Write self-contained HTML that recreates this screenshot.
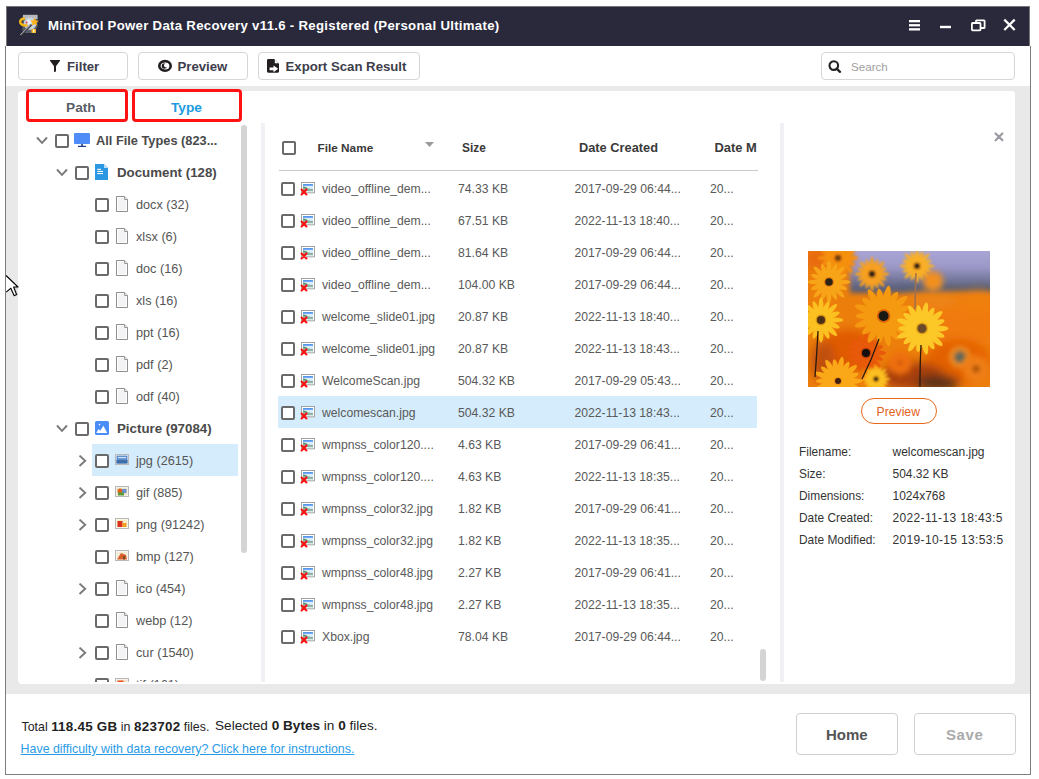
<!DOCTYPE html>
<html><head><meta charset="utf-8">
<style>
*{box-sizing:border-box;margin:0;padding:0}
html,body{width:1039px;height:779px;overflow:hidden;background:#fff;font-family:"Liberation Sans",sans-serif;position:relative}
.a{position:absolute}
.t{position:absolute;white-space:nowrap;line-height:16px;height:16px}
#title{left:6px;top:6px;width:1024px;height:40px;background:#2a293b;border:1px solid #75757a;border-bottom:0}
.btn{position:absolute;top:52px;height:28px;border:1px solid #d6d6d6;border-radius:4px;background:#fff}
.btxt{font-size:13.2px;font-weight:bold;color:#3d3d4b}
#gray{left:6px;top:86px;width:1024px;height:608px;background:#e9e9e9}
#panel{left:18px;top:91px;width:997px;height:593px;background:#fff;border-radius:4px;overflow:hidden}
.red{position:absolute;top:89px;height:33px;border:3px solid #fe1212;border-radius:4px}
.cb{position:absolute;width:14px;height:14px;border:2px solid #6a6a6a;border-radius:2px;background:#fff}
.tr{font-size:12.7px;color:#555}
.trb{font-size:13px;font-weight:bold;color:#4a4a4a}
.rw{font-size:12.2px;color:#595959}
.hd{font-size:12.4px;font-weight:bold;color:#3a3a3a}
.inf{font-size:12.2px;color:#333}
</style></head><body>
<!-- window border -->
<div class="a" style="left:5px;top:46px;width:1px;height:729px;background:#7d7d7d"></div>
<div class="a" style="left:1030px;top:46px;width:1px;height:729px;background:#7d7d7d"></div>
<div class="a" style="left:5px;top:774px;width:1026px;height:1px;background:#7d7d7d"></div>

<div id="title" class="a"></div>
<svg class="a" style="left:16px;top:11px" width="26" height="28" viewBox="16 11 26 28">
<path d="M23 15 H37.5 V27 L33 33 H22.5 V17Z" fill="#5c5e6a"/>
<path d="M23 14.8 H37.5 V19 H23Z" fill="#b8b8bc"/>
<circle cx="30" cy="23.5" r="6.3" fill="#c8d2dc"/>
<circle cx="29" cy="22" r="2.6" fill="#e6eef4"/>
<path d="M25 18.5 Q19 19 20.5 23 Q22 26 27.5 25.5" stroke="#f6b614" stroke-width="2.6" fill="none"/>
<circle cx="26.6" cy="22.4" r="1" fill="#e83a3a"/>
<path d="M34.5 17.5 l1.3 2.9 3 .3 -2.3 2 .7 3 -2.7 -1.6 -2.7 1.6 .7 -3 -2.3 -2 3 -.3z" fill="#ffb31a"/>
<path d="M20.5 35.5 L31.5 24.5" stroke="#3a3a44" stroke-width="2.2"/>
<path d="M20.3 35 L31 24.3" stroke="#c8ccd4" stroke-width="0.9"/>
<rect x="31.5" y="29" width="4.5" height="4" fill="#f2b21e"/>
<rect x="33" y="29.5" width="1.5" height="3" fill="#fff4c0"/>
</svg>
<div class="t " style="left:48px;top:17.73px;font-size:13.2px;font-weight:bold;color:#fff;letter-spacing:0.3px">MiniTool Power Data Recovery v11.6 - Registered (Personal Ultimate)</div>
<svg class="a" style="left:900px;top:14px" width="125" height="22" viewBox="900 14 125 22">
<g fill="#fff">
<rect x="909" y="20" width="11" height="2.3"/><rect x="909" y="24.1" width="11" height="2.3"/><rect x="909" y="28.2" width="11" height="2.3"/>
<rect x="940" y="25.8" width="11" height="2.4"/>
</g>
<g fill="none" stroke="#fff" stroke-width="1.8">
<rect x="976" y="20.4" width="8.6" height="7.6" rx="0.6"/>
<rect x="971.9" y="23" width="8.6" height="7.4" rx="0.8" fill="#2a293b"/>
<path d="M1004.3 19.6 L1014.7 30 M1014.7 19.6 L1004.3 30" stroke-width="2.2"/>
</g>
</svg>
<div class="btn" style="left:18px;width:110px"></div>
<svg class="a" style="left:49px;top:59px" width="12" height="14" viewBox="0 0 12 14"><path d="M1.2 1 H10.8 Q11.3 1 11 1.8 L7 7.2 V12.5 L5 13 V7.2 L1 1.8 Q0.7 1 1.2 1Z" fill="#231f20"/></svg>
<div class="t btxt" style="left:67px;top:59.43px;font-size:13.2px;">Filter</div>
<div class="btn" style="left:138px;width:110px"></div>
<svg class="a" style="left:157px;top:59px" width="16" height="14" viewBox="0 0 16 14"><ellipse cx="8" cy="6.9" rx="5.7" ry="4.8" fill="none" stroke="#231f20" stroke-width="2.6"/><circle cx="7.4" cy="7" r="2.7" fill="#231f20"/><circle cx="9.3" cy="6.3" r="2.3" fill="#fff"/></svg>
<div class="t btxt" style="left:177.5px;top:59.43px;font-size:13.2px;">Preview</div>
<div class="btn" style="left:258px;width:162px"></div>
<svg class="a" style="left:266px;top:58px" width="14" height="16" viewBox="0 0 14 16"><path d="M1 2.2 Q1 1 2.2 1 H8.2 L13 5.8 V13.6 Q13 14.7 11.8 14.7 H2.2 Q1 14.7 1 13.6Z" fill="#231f20"/><path d="M8.8 1.6 L12.4 5.2 H8.8Z" fill="#fff"/><path d="M3.6 9.4 H7.5 V7.4 L12.2 10.8 L7.5 14.2 V12.2 H3.6Z" fill="#fff"/></svg>
<div class="t btxt" style="left:285.5px;top:59.43px;font-size:13.2px;">Export Scan Result</div>
<div class="btn" style="left:821px;width:194px"></div>
<svg class="a" style="left:828px;top:60px" width="14" height="13" viewBox="0 0 14 13"><circle cx="5.8" cy="5.6" r="4.3" fill="none" stroke="#222" stroke-width="2.1"/><path d="M8.6 8.6 L12 11.8" stroke="#222" stroke-width="2.3" stroke-linecap="round"/></svg>
<div class="t " style="left:851px;top:58.98px;font-size:11.6px;color:#a0a0a0">Search</div>
<div id="gray" class="a"></div>
<div id="panel" class="a"></div>
<div class="red" style="left:26px;width:102px"></div>
<div class="red" style="left:132px;width:110px"></div>
<div class="t " style="left:66px;top:100.25px;font-size:13.7px;font-weight:bold;color:#5a5d66">Path</div>
<div class="t " style="left:171px;top:100.25px;font-size:13.7px;font-weight:bold;color:#1d9be2">Type</div>
<div class="a" style="left:0;top:0;width:1039px;height:682px;overflow:hidden">
<div class="a" style="left:92px;top:444px;width:146px;height:32px;background:#d5ecfc"></div>
<svg class="a" style="left:36px;top:135.5px" width="12" height="10" viewBox="0 0 12 10"><path d="M1 1.5 L6 6.8 L11 1.5" fill="none" stroke="#7a7a7a" stroke-width="1.9"/></svg>
<div class="cb" style="left:55px;top:134px"></div>
<svg class="a" style="left:74px;top:133px" width="16" height="14" viewBox="0 0 16 14"><rect x="0" y="0" width="16" height="11" rx="1" fill="#4f8cf7"/><rect x="7.2" y="11" width="1.6" height="2" fill="#1d3b8c"/><rect x="4" y="12.8" width="8" height="1.2" fill="#1d3b8c"/></svg>
<div class="t trb" style="left:96px;top:132.56px;font-size:12.8px;">All File Types (823...</div>
<svg class="a" style="left:56px;top:167.5px" width="12" height="10" viewBox="0 0 12 10"><path d="M1 1.5 L6 6.8 L11 1.5" fill="none" stroke="#7a7a7a" stroke-width="1.9"/></svg>
<div class="cb" style="left:75px;top:166px"></div>
<svg class="a" style="left:95px;top:164px" width="13" height="16" viewBox="0 0 13 16"><path d="M0 0 H9 L13 4 V16 H0Z" fill="#2c98e2"/><path d="M9 0 V4 H13Z" fill="#bfe0f8"/><rect x="2.2" y="4.8" width="3.8" height="1.1" fill="#fff"/><rect x="2.2" y="6.9" width="5.8" height="1.1" fill="#fff"/><rect x="2.2" y="9" width="5.8" height="1.1" fill="#fff"/></svg>
<div class="t trb" style="left:117px;top:164.99px;font-size:13.3px;">Document (128)</div>
<div class="cb" style="left:95px;top:198px"></div>
<svg class="a" style="left:116px;top:196px" width="12" height="16" viewBox="0 0 12 16"><path d="M0.5 0.5 H8.6 L11.5 3.4 V15.5 H0.5Z" fill="#fff" stroke="#8e8e8e"/><rect x="2" y="2" width="8" height="12" fill="#f3f3f5"/><path d="M8.6 0.5 V3.4 H11.5" fill="#fff" stroke="#8e8e8e"/></svg>
<div class="t tr" style="left:136px;top:196.80px;font-size:12.7px;">docx (32)</div>
<div class="cb" style="left:95px;top:230px"></div>
<svg class="a" style="left:116px;top:228px" width="12" height="16" viewBox="0 0 12 16"><path d="M0.5 0.5 H8.6 L11.5 3.4 V15.5 H0.5Z" fill="#fff" stroke="#8e8e8e"/><rect x="2" y="2" width="8" height="12" fill="#f3f3f5"/><path d="M8.6 0.5 V3.4 H11.5" fill="#fff" stroke="#8e8e8e"/></svg>
<div class="t tr" style="left:136px;top:228.80px;font-size:12.7px;">xlsx (6)</div>
<div class="cb" style="left:95px;top:262px"></div>
<svg class="a" style="left:116px;top:260px" width="12" height="16" viewBox="0 0 12 16"><path d="M0.5 0.5 H8.6 L11.5 3.4 V15.5 H0.5Z" fill="#fff" stroke="#8e8e8e"/><rect x="2" y="2" width="8" height="12" fill="#f3f3f5"/><path d="M8.6 0.5 V3.4 H11.5" fill="#fff" stroke="#8e8e8e"/></svg>
<div class="t tr" style="left:136px;top:260.80px;font-size:12.7px;">doc (16)</div>
<div class="cb" style="left:95px;top:294px"></div>
<svg class="a" style="left:116px;top:292px" width="12" height="16" viewBox="0 0 12 16"><path d="M0.5 0.5 H8.6 L11.5 3.4 V15.5 H0.5Z" fill="#fff" stroke="#8e8e8e"/><rect x="2" y="2" width="8" height="12" fill="#f3f3f5"/><path d="M8.6 0.5 V3.4 H11.5" fill="#fff" stroke="#8e8e8e"/></svg>
<div class="t tr" style="left:136px;top:292.80px;font-size:12.7px;">xls (16)</div>
<div class="cb" style="left:95px;top:326px"></div>
<svg class="a" style="left:116px;top:324px" width="12" height="16" viewBox="0 0 12 16"><path d="M0.5 0.5 H8.6 L11.5 3.4 V15.5 H0.5Z" fill="#fff" stroke="#8e8e8e"/><rect x="2" y="2" width="8" height="12" fill="#f3f3f5"/><path d="M8.6 0.5 V3.4 H11.5" fill="#fff" stroke="#8e8e8e"/></svg>
<div class="t tr" style="left:136px;top:324.80px;font-size:12.7px;">ppt (16)</div>
<div class="cb" style="left:95px;top:358px"></div>
<svg class="a" style="left:116px;top:356px" width="12" height="16" viewBox="0 0 12 16"><path d="M0.5 0.5 H8.6 L11.5 3.4 V15.5 H0.5Z" fill="#fff" stroke="#8e8e8e"/><rect x="2" y="2" width="8" height="12" fill="#f3f3f5"/><path d="M8.6 0.5 V3.4 H11.5" fill="#fff" stroke="#8e8e8e"/></svg>
<div class="t tr" style="left:136px;top:356.80px;font-size:12.7px;">pdf (2)</div>
<div class="cb" style="left:95px;top:390px"></div>
<svg class="a" style="left:116px;top:388px" width="12" height="16" viewBox="0 0 12 16"><path d="M0.5 0.5 H8.6 L11.5 3.4 V15.5 H0.5Z" fill="#fff" stroke="#8e8e8e"/><rect x="2" y="2" width="8" height="12" fill="#f3f3f5"/><path d="M8.6 0.5 V3.4 H11.5" fill="#fff" stroke="#8e8e8e"/></svg>
<div class="t tr" style="left:136px;top:388.80px;font-size:12.7px;">odf (40)</div>
<svg class="a" style="left:56px;top:423.5px" width="12" height="10" viewBox="0 0 12 10"><path d="M1 1.5 L6 6.8 L11 1.5" fill="none" stroke="#7a7a7a" stroke-width="1.9"/></svg>
<div class="cb" style="left:75px;top:422px"></div>
<svg class="a" style="left:95px;top:421px" width="14" height="14" viewBox="0 0 14 14"><rect x="0" y="0" width="14" height="14" rx="1.6" fill="#4a8cf8"/><path d="M1.3 12 L3.6 8 L5.2 9.8 L8.4 4.8 L12.2 12Z" fill="#fff"/><path d="M4.5 2.4 L5.3 3.6 L4.5 4.8 L3.7 3.6Z" fill="#fff"/></svg>
<div class="t trb" style="left:117px;top:420.99px;font-size:13.3px;">Picture (97084)</div>
<svg class="a" style="left:78px;top:455px" width="10" height="12" viewBox="0 0 10 12"><path d="M1.5 0.6 L7.2 5.8 L1.5 11" fill="none" stroke="#7a7a7a" stroke-width="1.9"/></svg>
<div class="cb" style="left:95px;top:454px"></div>
<svg class="a" style="left:115px;top:454px" width="14" height="11" viewBox="0 0 14 11"><rect x="0.5" y="0.5" width="13" height="10" fill="#fff" stroke="#b8b8b8"/><rect x="1.5" y="1.5" width="11" height="8" fill="#5b8fd0"/><rect x="1.5" y="6" width="11" height="3.5" fill="#3e6fa8"/><rect x="3" y="3" width="8" height="1.2" fill="#cfe2f5"/></svg>
<div class="t tr" style="left:136px;top:452.80px;font-size:12.7px;">jpg (2615)</div>
<svg class="a" style="left:78px;top:487px" width="10" height="12" viewBox="0 0 10 12"><path d="M1.5 0.6 L7.2 5.8 L1.5 11" fill="none" stroke="#7a7a7a" stroke-width="1.9"/></svg>
<div class="cb" style="left:95px;top:486px"></div>
<svg class="a" style="left:115px;top:486px" width="14" height="11" viewBox="0 0 14 11"><rect x="0.5" y="0.5" width="13" height="10" fill="#fff" stroke="#b8b8b8"/><rect x="1.5" y="1.5" width="11" height="8" fill="#e8e2c8"/><circle cx="5" cy="5" r="2.5" fill="#e0641a"/><rect x="7" y="3" width="4.5" height="4" fill="#6a8fd0"/><rect x="3" y="6.5" width="6" height="3" fill="#5a9a3a"/></svg>
<div class="t tr" style="left:136px;top:484.80px;font-size:12.7px;">gif (885)</div>
<svg class="a" style="left:78px;top:519px" width="10" height="12" viewBox="0 0 10 12"><path d="M1.5 0.6 L7.2 5.8 L1.5 11" fill="none" stroke="#7a7a7a" stroke-width="1.9"/></svg>
<div class="cb" style="left:95px;top:518px"></div>
<svg class="a" style="left:115px;top:518px" width="14" height="11" viewBox="0 0 14 11"><rect x="0.5" y="0.5" width="13" height="10" fill="#fff" stroke="#b8b8b8"/><rect x="1.5" y="1.5" width="11" height="8" fill="#f6e9c8"/><rect x="2.5" y="3" width="5" height="6" fill="#d8301a"/><rect x="7.5" y="5" width="4" height="4" fill="#f0a020"/></svg>
<div class="t tr" style="left:136px;top:516.80px;font-size:12.7px;">png (91242)</div>
<div class="cb" style="left:95px;top:550px"></div>
<svg class="a" style="left:115px;top:550px" width="14" height="11" viewBox="0 0 14 11"><rect x="0.5" y="0.5" width="13" height="10" fill="#fff" stroke="#b8b8b8"/><rect x="1.5" y="1.5" width="11" height="8" fill="#f3ead8"/><path d="M2 9.5 L6 3 L11 5 L12 9.5Z" fill="#d9602a"/><rect x="8" y="6" width="2" height="3.5" fill="#7a4a20"/></svg>
<div class="t tr" style="left:136px;top:548.80px;font-size:12.7px;">bmp (127)</div>
<svg class="a" style="left:78px;top:583px" width="10" height="12" viewBox="0 0 10 12"><path d="M1.5 0.6 L7.2 5.8 L1.5 11" fill="none" stroke="#7a7a7a" stroke-width="1.9"/></svg>
<div class="cb" style="left:95px;top:582px"></div>
<svg class="a" style="left:116px;top:580px" width="12" height="16" viewBox="0 0 12 16"><path d="M0.5 0.5 H8.6 L11.5 3.4 V15.5 H0.5Z" fill="#fff" stroke="#8e8e8e"/><rect x="2" y="2" width="8" height="12" fill="#f3f3f5"/><path d="M8.6 0.5 V3.4 H11.5" fill="#fff" stroke="#8e8e8e"/></svg>
<div class="t tr" style="left:136px;top:580.80px;font-size:12.7px;">ico (454)</div>
<div class="cb" style="left:95px;top:614px"></div>
<svg class="a" style="left:116px;top:612px" width="12" height="16" viewBox="0 0 12 16"><path d="M0.5 0.5 H8.6 L11.5 3.4 V15.5 H0.5Z" fill="#fff" stroke="#8e8e8e"/><rect x="2" y="2" width="8" height="12" fill="#f3f3f5"/><path d="M8.6 0.5 V3.4 H11.5" fill="#fff" stroke="#8e8e8e"/></svg>
<div class="t tr" style="left:136px;top:612.80px;font-size:12.7px;">webp (12)</div>
<svg class="a" style="left:78px;top:647px" width="10" height="12" viewBox="0 0 10 12"><path d="M1.5 0.6 L7.2 5.8 L1.5 11" fill="none" stroke="#7a7a7a" stroke-width="1.9"/></svg>
<div class="cb" style="left:95px;top:646px"></div>
<svg class="a" style="left:116px;top:644px" width="12" height="16" viewBox="0 0 12 16"><path d="M0.5 0.5 H8.6 L11.5 3.4 V15.5 H0.5Z" fill="#fff" stroke="#8e8e8e"/><rect x="2" y="2" width="8" height="12" fill="#f3f3f5"/><path d="M8.6 0.5 V3.4 H11.5" fill="#fff" stroke="#8e8e8e"/></svg>
<div class="t tr" style="left:136px;top:644.80px;font-size:12.7px;">cur (1540)</div>
<div class="cb" style="left:95px;top:678px"></div>
<svg class="a" style="left:115px;top:678px" width="14" height="11" viewBox="0 0 14 11"><rect x="0.5" y="0.5" width="13" height="10" fill="#fff" stroke="#b8b8b8"/><rect x="1.5" y="1.5" width="11" height="8" fill="#f0e0d0"/><rect x="2.5" y="2.5" width="6" height="7" fill="#e85a1a"/></svg>
<div class="t tr" style="left:136px;top:676.80px;font-size:12.7px;">tif (161)</div>
<div class="a" style="left:241px;top:125px;width:6px;height:428px;background:#d4d4d4;border-radius:3px"></div>
<div class="a" style="left:261px;top:123px;width:4px;height:561px;background:#f0f0f5"></div>
<div class="a" style="left:780px;top:123px;width:4px;height:561px;background:#f0f0f5"></div>
<div class="cb" style="left:282px;top:141px"></div>
<div class="t hd" style="left:317.5px;top:139.91px;font-size:11.8px;">File Name</div>
<svg class="a" style="left:424px;top:141px" width="11" height="7" viewBox="0 0 11 7"><path d="M1 1 H10 L5.5 6Z" fill="#9a9a9a"/></svg>
<div class="t hd" style="left:462px;top:139.88px;font-size:11.9px;">Size</div>
<div class="t hd" style="left:579px;top:139.56px;font-size:12.8px;">Date Created</div>
<div class="t hd" style="left:714.5px;top:139.53px;font-size:12.9px;">Date M</div>
<div class="a" style="left:279px;top:170px;width:479px;height:1px;background:#c9c9c9"></div>
<div class="a" style="left:278px;top:396px;width:479px;height:32px;background:#d5ecfc"></div>
<div class="cb" style="left:281px;top:182px"></div>
<svg class="a" style="left:300px;top:181px" width="16" height="15" viewBox="0 0 16 15"><rect x="1.5" y="1.5" width="13" height="10.3" fill="#fff" stroke="#a3a3a3"/><rect x="3" y="3" width="10" height="7.3" fill="#dcf0f8"/><rect x="3" y="3" width="10" height="1.8" fill="#5a98f0"/><path d="M3 5.6 Q6 5.4 8.5 7.6 L13 8 V10.3 H3Z" fill="#8ab4a4"/><path d="M3 6.2 Q5 6 7 7.5" stroke="#5a8a64" stroke-width="1" fill="none"/><path d="M1.6 8.6 L6.4 13.4 M6.4 8.6 L1.6 13.4" stroke="#ff0d0d" stroke-width="2.1" stroke-linecap="round"/></svg>
<div class="t rw" style="left:322px;top:180.77px;font-size:12.2px;">video_offline_dem...</div>
<div class="t rw" style="left:458px;top:180.77px;font-size:12.2px;">74.33 KB</div>
<div class="t rw" style="left:574.5px;top:180.77px;font-size:12.2px;">2017-09-29 06:44...</div>
<div class="t rw" style="left:710px;top:180.77px;font-size:12.2px;">20...</div>
<div class="cb" style="left:281px;top:214px"></div>
<svg class="a" style="left:300px;top:213px" width="16" height="15" viewBox="0 0 16 15"><rect x="1.5" y="1.5" width="13" height="10.3" fill="#fff" stroke="#a3a3a3"/><rect x="3" y="3" width="10" height="7.3" fill="#dcf0f8"/><rect x="3" y="3" width="10" height="1.8" fill="#5a98f0"/><path d="M3 5.6 Q6 5.4 8.5 7.6 L13 8 V10.3 H3Z" fill="#8ab4a4"/><path d="M3 6.2 Q5 6 7 7.5" stroke="#5a8a64" stroke-width="1" fill="none"/><path d="M1.6 8.6 L6.4 13.4 M6.4 8.6 L1.6 13.4" stroke="#ff0d0d" stroke-width="2.1" stroke-linecap="round"/></svg>
<div class="t rw" style="left:322px;top:212.77px;font-size:12.2px;">video_offline_dem...</div>
<div class="t rw" style="left:458px;top:212.77px;font-size:12.2px;">67.51 KB</div>
<div class="t rw" style="left:574.5px;top:212.77px;font-size:12.2px;">2022-11-13 18:40...</div>
<div class="t rw" style="left:710px;top:212.77px;font-size:12.2px;">20...</div>
<div class="cb" style="left:281px;top:246px"></div>
<svg class="a" style="left:300px;top:245px" width="16" height="15" viewBox="0 0 16 15"><rect x="1.5" y="1.5" width="13" height="10.3" fill="#fff" stroke="#a3a3a3"/><rect x="3" y="3" width="10" height="7.3" fill="#dcf0f8"/><rect x="3" y="3" width="10" height="1.8" fill="#5a98f0"/><path d="M3 5.6 Q6 5.4 8.5 7.6 L13 8 V10.3 H3Z" fill="#8ab4a4"/><path d="M3 6.2 Q5 6 7 7.5" stroke="#5a8a64" stroke-width="1" fill="none"/><path d="M1.6 8.6 L6.4 13.4 M6.4 8.6 L1.6 13.4" stroke="#ff0d0d" stroke-width="2.1" stroke-linecap="round"/></svg>
<div class="t rw" style="left:322px;top:244.77px;font-size:12.2px;">video_offline_dem...</div>
<div class="t rw" style="left:458px;top:244.77px;font-size:12.2px;">81.64 KB</div>
<div class="t rw" style="left:574.5px;top:244.77px;font-size:12.2px;">2017-09-29 06:44...</div>
<div class="t rw" style="left:710px;top:244.77px;font-size:12.2px;">20...</div>
<div class="cb" style="left:281px;top:278px"></div>
<svg class="a" style="left:300px;top:277px" width="16" height="15" viewBox="0 0 16 15"><rect x="1.5" y="1.5" width="13" height="10.3" fill="#fff" stroke="#a3a3a3"/><rect x="3" y="3" width="10" height="7.3" fill="#dcf0f8"/><rect x="3" y="3" width="10" height="1.8" fill="#5a98f0"/><path d="M3 5.6 Q6 5.4 8.5 7.6 L13 8 V10.3 H3Z" fill="#8ab4a4"/><path d="M3 6.2 Q5 6 7 7.5" stroke="#5a8a64" stroke-width="1" fill="none"/><path d="M1.6 8.6 L6.4 13.4 M6.4 8.6 L1.6 13.4" stroke="#ff0d0d" stroke-width="2.1" stroke-linecap="round"/></svg>
<div class="t rw" style="left:322px;top:276.77px;font-size:12.2px;">video_offline_dem...</div>
<div class="t rw" style="left:458px;top:276.77px;font-size:12.2px;">104.00 KB</div>
<div class="t rw" style="left:574.5px;top:276.77px;font-size:12.2px;">2017-09-29 06:44...</div>
<div class="t rw" style="left:710px;top:276.77px;font-size:12.2px;">20...</div>
<div class="cb" style="left:281px;top:310px"></div>
<svg class="a" style="left:300px;top:309px" width="16" height="15" viewBox="0 0 16 15"><rect x="1.5" y="1.5" width="13" height="10.3" fill="#fff" stroke="#a3a3a3"/><rect x="3" y="3" width="10" height="7.3" fill="#dcf0f8"/><rect x="3" y="3" width="10" height="1.8" fill="#5a98f0"/><path d="M3 5.6 Q6 5.4 8.5 7.6 L13 8 V10.3 H3Z" fill="#8ab4a4"/><path d="M3 6.2 Q5 6 7 7.5" stroke="#5a8a64" stroke-width="1" fill="none"/><path d="M1.6 8.6 L6.4 13.4 M6.4 8.6 L1.6 13.4" stroke="#ff0d0d" stroke-width="2.1" stroke-linecap="round"/></svg>
<div class="t rw" style="left:322px;top:308.77px;font-size:12.2px;">welcome_slide01.jpg</div>
<div class="t rw" style="left:458px;top:308.77px;font-size:12.2px;">20.87 KB</div>
<div class="t rw" style="left:574.5px;top:308.77px;font-size:12.2px;">2022-11-13 18:40...</div>
<div class="t rw" style="left:710px;top:308.77px;font-size:12.2px;">20...</div>
<div class="cb" style="left:281px;top:342px"></div>
<svg class="a" style="left:300px;top:341px" width="16" height="15" viewBox="0 0 16 15"><rect x="1.5" y="1.5" width="13" height="10.3" fill="#fff" stroke="#a3a3a3"/><rect x="3" y="3" width="10" height="7.3" fill="#dcf0f8"/><rect x="3" y="3" width="10" height="1.8" fill="#5a98f0"/><path d="M3 5.6 Q6 5.4 8.5 7.6 L13 8 V10.3 H3Z" fill="#8ab4a4"/><path d="M3 6.2 Q5 6 7 7.5" stroke="#5a8a64" stroke-width="1" fill="none"/><path d="M1.6 8.6 L6.4 13.4 M6.4 8.6 L1.6 13.4" stroke="#ff0d0d" stroke-width="2.1" stroke-linecap="round"/></svg>
<div class="t rw" style="left:322px;top:340.77px;font-size:12.2px;">welcome_slide01.jpg</div>
<div class="t rw" style="left:458px;top:340.77px;font-size:12.2px;">20.87 KB</div>
<div class="t rw" style="left:574.5px;top:340.77px;font-size:12.2px;">2022-11-13 18:43...</div>
<div class="t rw" style="left:710px;top:340.77px;font-size:12.2px;">20...</div>
<div class="cb" style="left:281px;top:374px"></div>
<svg class="a" style="left:300px;top:373px" width="16" height="15" viewBox="0 0 16 15"><rect x="1.5" y="1.5" width="13" height="10.3" fill="#fff" stroke="#a3a3a3"/><rect x="3" y="3" width="10" height="7.3" fill="#dcf0f8"/><rect x="3" y="3" width="10" height="1.8" fill="#5a98f0"/><path d="M3 5.6 Q6 5.4 8.5 7.6 L13 8 V10.3 H3Z" fill="#8ab4a4"/><path d="M3 6.2 Q5 6 7 7.5" stroke="#5a8a64" stroke-width="1" fill="none"/><path d="M1.6 8.6 L6.4 13.4 M6.4 8.6 L1.6 13.4" stroke="#ff0d0d" stroke-width="2.1" stroke-linecap="round"/></svg>
<div class="t rw" style="left:322px;top:372.77px;font-size:12.2px;">WelcomeScan.jpg</div>
<div class="t rw" style="left:458px;top:372.77px;font-size:12.2px;">504.32 KB</div>
<div class="t rw" style="left:574.5px;top:372.77px;font-size:12.2px;">2017-09-29 05:43...</div>
<div class="t rw" style="left:710px;top:372.77px;font-size:12.2px;">20...</div>
<div class="cb" style="left:281px;top:406px"></div>
<svg class="a" style="left:300px;top:405px" width="16" height="15" viewBox="0 0 16 15"><rect x="1.5" y="1.5" width="13" height="10.3" fill="#fff" stroke="#a3a3a3"/><rect x="3" y="3" width="10" height="7.3" fill="#dcf0f8"/><rect x="3" y="3" width="10" height="1.8" fill="#5a98f0"/><path d="M3 5.6 Q6 5.4 8.5 7.6 L13 8 V10.3 H3Z" fill="#8ab4a4"/><path d="M3 6.2 Q5 6 7 7.5" stroke="#5a8a64" stroke-width="1" fill="none"/><path d="M1.6 8.6 L6.4 13.4 M6.4 8.6 L1.6 13.4" stroke="#ff0d0d" stroke-width="2.1" stroke-linecap="round"/></svg>
<div class="t rw" style="left:322px;top:404.77px;font-size:12.2px;">welcomescan.jpg</div>
<div class="t rw" style="left:458px;top:404.77px;font-size:12.2px;">504.32 KB</div>
<div class="t rw" style="left:574.5px;top:404.77px;font-size:12.2px;">2022-11-13 18:43...</div>
<div class="t rw" style="left:710px;top:404.77px;font-size:12.2px;">20...</div>
<div class="cb" style="left:281px;top:438px"></div>
<svg class="a" style="left:300px;top:437px" width="16" height="15" viewBox="0 0 16 15"><rect x="1.5" y="1.5" width="13" height="10.3" fill="#fff" stroke="#a3a3a3"/><rect x="3" y="3" width="10" height="7.3" fill="#dcf0f8"/><rect x="3" y="3" width="10" height="1.8" fill="#5a98f0"/><path d="M3 5.6 Q6 5.4 8.5 7.6 L13 8 V10.3 H3Z" fill="#8ab4a4"/><path d="M3 6.2 Q5 6 7 7.5" stroke="#5a8a64" stroke-width="1" fill="none"/><path d="M1.6 8.6 L6.4 13.4 M6.4 8.6 L1.6 13.4" stroke="#ff0d0d" stroke-width="2.1" stroke-linecap="round"/></svg>
<div class="t rw" style="left:322px;top:436.77px;font-size:12.2px;">wmpnss_color120....</div>
<div class="t rw" style="left:458px;top:436.77px;font-size:12.2px;">4.63 KB</div>
<div class="t rw" style="left:574.5px;top:436.77px;font-size:12.2px;">2017-09-29 06:41...</div>
<div class="t rw" style="left:710px;top:436.77px;font-size:12.2px;">20...</div>
<div class="cb" style="left:281px;top:470px"></div>
<svg class="a" style="left:300px;top:469px" width="16" height="15" viewBox="0 0 16 15"><rect x="1.5" y="1.5" width="13" height="10.3" fill="#fff" stroke="#a3a3a3"/><rect x="3" y="3" width="10" height="7.3" fill="#dcf0f8"/><rect x="3" y="3" width="10" height="1.8" fill="#5a98f0"/><path d="M3 5.6 Q6 5.4 8.5 7.6 L13 8 V10.3 H3Z" fill="#8ab4a4"/><path d="M3 6.2 Q5 6 7 7.5" stroke="#5a8a64" stroke-width="1" fill="none"/><path d="M1.6 8.6 L6.4 13.4 M6.4 8.6 L1.6 13.4" stroke="#ff0d0d" stroke-width="2.1" stroke-linecap="round"/></svg>
<div class="t rw" style="left:322px;top:468.77px;font-size:12.2px;">wmpnss_color120....</div>
<div class="t rw" style="left:458px;top:468.77px;font-size:12.2px;">4.63 KB</div>
<div class="t rw" style="left:574.5px;top:468.77px;font-size:12.2px;">2022-11-13 18:35...</div>
<div class="t rw" style="left:710px;top:468.77px;font-size:12.2px;">20...</div>
<div class="cb" style="left:281px;top:502px"></div>
<svg class="a" style="left:300px;top:501px" width="16" height="15" viewBox="0 0 16 15"><rect x="1.5" y="1.5" width="13" height="10.3" fill="#fff" stroke="#a3a3a3"/><rect x="3" y="3" width="10" height="7.3" fill="#dcf0f8"/><rect x="3" y="3" width="10" height="1.8" fill="#5a98f0"/><path d="M3 5.6 Q6 5.4 8.5 7.6 L13 8 V10.3 H3Z" fill="#8ab4a4"/><path d="M3 6.2 Q5 6 7 7.5" stroke="#5a8a64" stroke-width="1" fill="none"/><path d="M1.6 8.6 L6.4 13.4 M6.4 8.6 L1.6 13.4" stroke="#ff0d0d" stroke-width="2.1" stroke-linecap="round"/></svg>
<div class="t rw" style="left:322px;top:500.77px;font-size:12.2px;">wmpnss_color32.jpg</div>
<div class="t rw" style="left:458px;top:500.77px;font-size:12.2px;">1.82 KB</div>
<div class="t rw" style="left:574.5px;top:500.77px;font-size:12.2px;">2017-09-29 06:41...</div>
<div class="t rw" style="left:710px;top:500.77px;font-size:12.2px;">20...</div>
<div class="cb" style="left:281px;top:534px"></div>
<svg class="a" style="left:300px;top:533px" width="16" height="15" viewBox="0 0 16 15"><rect x="1.5" y="1.5" width="13" height="10.3" fill="#fff" stroke="#a3a3a3"/><rect x="3" y="3" width="10" height="7.3" fill="#dcf0f8"/><rect x="3" y="3" width="10" height="1.8" fill="#5a98f0"/><path d="M3 5.6 Q6 5.4 8.5 7.6 L13 8 V10.3 H3Z" fill="#8ab4a4"/><path d="M3 6.2 Q5 6 7 7.5" stroke="#5a8a64" stroke-width="1" fill="none"/><path d="M1.6 8.6 L6.4 13.4 M6.4 8.6 L1.6 13.4" stroke="#ff0d0d" stroke-width="2.1" stroke-linecap="round"/></svg>
<div class="t rw" style="left:322px;top:532.77px;font-size:12.2px;">wmpnss_color32.jpg</div>
<div class="t rw" style="left:458px;top:532.77px;font-size:12.2px;">1.82 KB</div>
<div class="t rw" style="left:574.5px;top:532.77px;font-size:12.2px;">2022-11-13 18:35...</div>
<div class="t rw" style="left:710px;top:532.77px;font-size:12.2px;">20...</div>
<div class="cb" style="left:281px;top:566px"></div>
<svg class="a" style="left:300px;top:565px" width="16" height="15" viewBox="0 0 16 15"><rect x="1.5" y="1.5" width="13" height="10.3" fill="#fff" stroke="#a3a3a3"/><rect x="3" y="3" width="10" height="7.3" fill="#dcf0f8"/><rect x="3" y="3" width="10" height="1.8" fill="#5a98f0"/><path d="M3 5.6 Q6 5.4 8.5 7.6 L13 8 V10.3 H3Z" fill="#8ab4a4"/><path d="M3 6.2 Q5 6 7 7.5" stroke="#5a8a64" stroke-width="1" fill="none"/><path d="M1.6 8.6 L6.4 13.4 M6.4 8.6 L1.6 13.4" stroke="#ff0d0d" stroke-width="2.1" stroke-linecap="round"/></svg>
<div class="t rw" style="left:322px;top:564.77px;font-size:12.2px;">wmpnss_color48.jpg</div>
<div class="t rw" style="left:458px;top:564.77px;font-size:12.2px;">2.27 KB</div>
<div class="t rw" style="left:574.5px;top:564.77px;font-size:12.2px;">2017-09-29 06:41...</div>
<div class="t rw" style="left:710px;top:564.77px;font-size:12.2px;">20...</div>
<div class="cb" style="left:281px;top:598px"></div>
<svg class="a" style="left:300px;top:597px" width="16" height="15" viewBox="0 0 16 15"><rect x="1.5" y="1.5" width="13" height="10.3" fill="#fff" stroke="#a3a3a3"/><rect x="3" y="3" width="10" height="7.3" fill="#dcf0f8"/><rect x="3" y="3" width="10" height="1.8" fill="#5a98f0"/><path d="M3 5.6 Q6 5.4 8.5 7.6 L13 8 V10.3 H3Z" fill="#8ab4a4"/><path d="M3 6.2 Q5 6 7 7.5" stroke="#5a8a64" stroke-width="1" fill="none"/><path d="M1.6 8.6 L6.4 13.4 M6.4 8.6 L1.6 13.4" stroke="#ff0d0d" stroke-width="2.1" stroke-linecap="round"/></svg>
<div class="t rw" style="left:322px;top:596.77px;font-size:12.2px;">wmpnss_color48.jpg</div>
<div class="t rw" style="left:458px;top:596.77px;font-size:12.2px;">2.27 KB</div>
<div class="t rw" style="left:574.5px;top:596.77px;font-size:12.2px;">2022-11-13 18:35...</div>
<div class="t rw" style="left:710px;top:596.77px;font-size:12.2px;">20...</div>
<div class="cb" style="left:281px;top:630px"></div>
<svg class="a" style="left:300px;top:629px" width="16" height="15" viewBox="0 0 16 15"><rect x="1.5" y="1.5" width="13" height="10.3" fill="#fff" stroke="#a3a3a3"/><rect x="3" y="3" width="10" height="7.3" fill="#dcf0f8"/><rect x="3" y="3" width="10" height="1.8" fill="#5a98f0"/><path d="M3 5.6 Q6 5.4 8.5 7.6 L13 8 V10.3 H3Z" fill="#8ab4a4"/><path d="M3 6.2 Q5 6 7 7.5" stroke="#5a8a64" stroke-width="1" fill="none"/><path d="M1.6 8.6 L6.4 13.4 M6.4 8.6 L1.6 13.4" stroke="#ff0d0d" stroke-width="2.1" stroke-linecap="round"/></svg>
<div class="t rw" style="left:322px;top:628.77px;font-size:12.2px;">Xbox.jpg</div>
<div class="t rw" style="left:458px;top:628.77px;font-size:12.2px;">78.04 KB</div>
<div class="t rw" style="left:574.5px;top:628.77px;font-size:12.2px;">2017-09-29 06:44...</div>
<div class="t rw" style="left:710px;top:628.77px;font-size:12.2px;">20...</div>
<div class="a" style="left:760px;top:649px;width:6px;height:32px;background:#d4d4d4;border-radius:3px"></div>
</div>
<svg class="a" style="left:994px;top:132px" width="10" height="10" viewBox="0 0 10 10"><path d="M1.6 1.4 L8.4 8.3 M8.4 1.4 L1.6 8.3" stroke="#9a9aa2" stroke-width="2.1" stroke-linecap="round"/></svg>
<svg class="a" style="left:808px;top:251px" width="182" height="136" viewBox="0 0 182 136"><defs><linearGradient id="sky" x1="0" y1="0" x2="0" y2="1"><stop offset="0" stop-color="#b0acdc"/><stop offset="0.5" stop-color="#9c98c8"/><stop offset="0.8" stop-color="#6c7090"/><stop offset="1" stop-color="#50566e"/></linearGradient><filter id="b1" x="-50%" y="-50%" width="200%" height="200%"><feGaussianBlur stdDeviation="1"/></filter><filter id="b2" x="-50%" y="-50%" width="200%" height="200%"><feGaussianBlur stdDeviation="2.5"/></filter><filter id="b3" x="-50%" y="-50%" width="200%" height="200%"><feGaussianBlur stdDeviation="5"/></filter><clipPath id="ic"><rect width="182" height="136"/></clipPath></defs><g clip-path="url(#ic)"><rect width="182" height="136" fill="#ec7e0c"/><g filter="url(#b2)"><rect x="42" y="-10" width="150" height="52" fill="url(#sky)"/><rect x="90" y="34" width="92" height="8" fill="#5a6078"/></g><g filter="url(#b3)"><ellipse cx="150" cy="72" rx="45" ry="30" fill="#f07a08"/><ellipse cx="170" cy="50" rx="20" ry="10" fill="#f08010"/><ellipse cx="125" cy="50" rx="25" ry="8" fill="#ec8418"/><ellipse cx="150" cy="110" rx="32" ry="22" fill="#e46004"/><ellipse cx="105" cy="125" rx="32" ry="14" fill="#a8400c"/><ellipse cx="40" cy="100" rx="28" ry="22" fill="#e05a06"/><ellipse cx="15" cy="110" rx="12" ry="20" fill="#c05010"/><ellipse cx="130" cy="132" rx="22" ry="8" fill="#5a3018"/><ellipse cx="20" cy="8" rx="25" ry="12" fill="#e86a10"/></g><g filter="url(#b2)"><circle cx="152" cy="106" r="6" fill="#5a6a60"/><circle cx="152" cy="106" r="9" fill="none" stroke="#f0a030" stroke-width="3"/></g><g transform="translate(30 7) scale(1 1.0)" filter="url(#b1)"><circle r="12.0" fill="#e07010"/><ellipse cx="11.0" cy="0" rx="9.4" ry="2.4" fill="#f59010" transform="rotate(0.0)"/><ellipse cx="9.9" cy="0" rx="8.5" ry="2.4" fill="#f59010" transform="rotate(22.5)"/><ellipse cx="11.0" cy="0" rx="9.4" ry="2.4" fill="#f59010" transform="rotate(45.0)"/><ellipse cx="9.9" cy="0" rx="8.5" ry="2.4" fill="#f59010" transform="rotate(67.5)"/><ellipse cx="11.0" cy="0" rx="9.4" ry="2.4" fill="#f59010" transform="rotate(90.0)"/><ellipse cx="9.9" cy="0" rx="8.5" ry="2.4" fill="#f59010" transform="rotate(112.5)"/><ellipse cx="11.0" cy="0" rx="9.4" ry="2.4" fill="#f59010" transform="rotate(135.0)"/><ellipse cx="9.9" cy="0" rx="8.5" ry="2.4" fill="#f59010" transform="rotate(157.5)"/><ellipse cx="11.0" cy="0" rx="9.4" ry="2.4" fill="#f59010" transform="rotate(180.0)"/><ellipse cx="9.9" cy="0" rx="8.5" ry="2.4" fill="#f59010" transform="rotate(202.5)"/><ellipse cx="11.0" cy="0" rx="9.4" ry="2.4" fill="#f59010" transform="rotate(225.0)"/><ellipse cx="9.9" cy="0" rx="8.5" ry="2.4" fill="#f59010" transform="rotate(247.5)"/><ellipse cx="11.0" cy="0" rx="9.4" ry="2.4" fill="#f59010" transform="rotate(270.0)"/><ellipse cx="9.9" cy="0" rx="8.5" ry="2.4" fill="#f59010" transform="rotate(292.5)"/><ellipse cx="11.0" cy="0" rx="9.4" ry="2.4" fill="#f59010" transform="rotate(315.0)"/><ellipse cx="9.9" cy="0" rx="8.5" ry="2.4" fill="#f59010" transform="rotate(337.5)"/><circle r="4.1" fill="#e07010"/><circle r="3.0" fill="#704010"/></g><g transform="translate(21 31) scale(1 1.0)"><circle r="12.6" fill="#e88010"/><ellipse cx="11.6" cy="0" rx="9.9" ry="2.5" fill="#f8a418" transform="rotate(0.0)"/><ellipse cx="10.4" cy="0" rx="8.9" ry="2.5" fill="#f8a418" transform="rotate(22.5)"/><ellipse cx="11.6" cy="0" rx="9.9" ry="2.5" fill="#f8a418" transform="rotate(45.0)"/><ellipse cx="10.4" cy="0" rx="8.9" ry="2.5" fill="#f8a418" transform="rotate(67.5)"/><ellipse cx="11.6" cy="0" rx="9.9" ry="2.5" fill="#f8a418" transform="rotate(90.0)"/><ellipse cx="10.4" cy="0" rx="8.9" ry="2.5" fill="#f8a418" transform="rotate(112.5)"/><ellipse cx="11.6" cy="0" rx="9.9" ry="2.5" fill="#f8a418" transform="rotate(135.0)"/><ellipse cx="10.4" cy="0" rx="8.9" ry="2.5" fill="#f8a418" transform="rotate(157.5)"/><ellipse cx="11.6" cy="0" rx="9.9" ry="2.5" fill="#f8a418" transform="rotate(180.0)"/><ellipse cx="10.4" cy="0" rx="8.9" ry="2.5" fill="#f8a418" transform="rotate(202.5)"/><ellipse cx="11.6" cy="0" rx="9.9" ry="2.5" fill="#f8a418" transform="rotate(225.0)"/><ellipse cx="10.4" cy="0" rx="8.9" ry="2.5" fill="#f8a418" transform="rotate(247.5)"/><ellipse cx="11.6" cy="0" rx="9.9" ry="2.5" fill="#f8a418" transform="rotate(270.0)"/><ellipse cx="10.4" cy="0" rx="8.9" ry="2.5" fill="#f8a418" transform="rotate(292.5)"/><ellipse cx="11.6" cy="0" rx="9.9" ry="2.5" fill="#f8a418" transform="rotate(315.0)"/><ellipse cx="10.4" cy="0" rx="8.9" ry="2.5" fill="#f8a418" transform="rotate(337.5)"/><circle r="5.1" fill="#e88010"/><circle r="3.8" fill="#2a2418"/></g><g transform="translate(64 23) scale(1 1.0)" filter="url(#b1)"><circle r="10.2" fill="#e88818"/><ellipse cx="9.4" cy="0" rx="8.0" ry="2.0" fill="#f6a020" transform="rotate(0.0)"/><ellipse cx="8.4" cy="0" rx="7.2" ry="2.0" fill="#f6a020" transform="rotate(22.5)"/><ellipse cx="9.4" cy="0" rx="8.0" ry="2.0" fill="#f6a020" transform="rotate(45.0)"/><ellipse cx="8.4" cy="0" rx="7.2" ry="2.0" fill="#f6a020" transform="rotate(67.5)"/><ellipse cx="9.4" cy="0" rx="8.0" ry="2.0" fill="#f6a020" transform="rotate(90.0)"/><ellipse cx="8.4" cy="0" rx="7.2" ry="2.0" fill="#f6a020" transform="rotate(112.5)"/><ellipse cx="9.4" cy="0" rx="8.0" ry="2.0" fill="#f6a020" transform="rotate(135.0)"/><ellipse cx="8.4" cy="0" rx="7.2" ry="2.0" fill="#f6a020" transform="rotate(157.5)"/><ellipse cx="9.4" cy="0" rx="8.0" ry="2.0" fill="#f6a020" transform="rotate(180.0)"/><ellipse cx="8.4" cy="0" rx="7.2" ry="2.0" fill="#f6a020" transform="rotate(202.5)"/><ellipse cx="9.4" cy="0" rx="8.0" ry="2.0" fill="#f6a020" transform="rotate(225.0)"/><ellipse cx="8.4" cy="0" rx="7.2" ry="2.0" fill="#f6a020" transform="rotate(247.5)"/><ellipse cx="9.4" cy="0" rx="8.0" ry="2.0" fill="#f6a020" transform="rotate(270.0)"/><ellipse cx="8.4" cy="0" rx="7.2" ry="2.0" fill="#f6a020" transform="rotate(292.5)"/><ellipse cx="9.4" cy="0" rx="8.0" ry="2.0" fill="#f6a020" transform="rotate(315.0)"/><ellipse cx="8.4" cy="0" rx="7.2" ry="2.0" fill="#f6a020" transform="rotate(337.5)"/><circle r="4.3" fill="#e88818"/><circle r="3.2" fill="#2a2418"/></g><g transform="translate(109 15) scale(1 1.0)" filter="url(#b1)"><circle r="10.2" fill="#f09018"/><ellipse cx="9.4" cy="0" rx="8.0" ry="2.0" fill="#f8b028" transform="rotate(0.0)"/><ellipse cx="8.4" cy="0" rx="7.2" ry="2.0" fill="#f8b028" transform="rotate(22.5)"/><ellipse cx="9.4" cy="0" rx="8.0" ry="2.0" fill="#f8b028" transform="rotate(45.0)"/><ellipse cx="8.4" cy="0" rx="7.2" ry="2.0" fill="#f8b028" transform="rotate(67.5)"/><ellipse cx="9.4" cy="0" rx="8.0" ry="2.0" fill="#f8b028" transform="rotate(90.0)"/><ellipse cx="8.4" cy="0" rx="7.2" ry="2.0" fill="#f8b028" transform="rotate(112.5)"/><ellipse cx="9.4" cy="0" rx="8.0" ry="2.0" fill="#f8b028" transform="rotate(135.0)"/><ellipse cx="8.4" cy="0" rx="7.2" ry="2.0" fill="#f8b028" transform="rotate(157.5)"/><ellipse cx="9.4" cy="0" rx="8.0" ry="2.0" fill="#f8b028" transform="rotate(180.0)"/><ellipse cx="8.4" cy="0" rx="7.2" ry="2.0" fill="#f8b028" transform="rotate(202.5)"/><ellipse cx="9.4" cy="0" rx="8.0" ry="2.0" fill="#f8b028" transform="rotate(225.0)"/><ellipse cx="8.4" cy="0" rx="7.2" ry="2.0" fill="#f8b028" transform="rotate(247.5)"/><ellipse cx="9.4" cy="0" rx="8.0" ry="2.0" fill="#f8b028" transform="rotate(270.0)"/><ellipse cx="8.4" cy="0" rx="7.2" ry="2.0" fill="#f8b028" transform="rotate(292.5)"/><ellipse cx="9.4" cy="0" rx="8.0" ry="2.0" fill="#f8b028" transform="rotate(315.0)"/><ellipse cx="8.4" cy="0" rx="7.2" ry="2.0" fill="#f8b028" transform="rotate(337.5)"/><circle r="4.1" fill="#f09018"/><circle r="3.0" fill="#2a2418"/></g><g transform="translate(125 30) scale(1 1.0)" filter="url(#b2)"><circle r="7.2" fill="#e88018"/><ellipse cx="6.6" cy="0" rx="5.6" ry="1.4" fill="#f39020" transform="rotate(0.0)"/><ellipse cx="5.9" cy="0" rx="5.1" ry="1.4" fill="#f39020" transform="rotate(22.5)"/><ellipse cx="6.6" cy="0" rx="5.6" ry="1.4" fill="#f39020" transform="rotate(45.0)"/><ellipse cx="5.9" cy="0" rx="5.1" ry="1.4" fill="#f39020" transform="rotate(67.5)"/><ellipse cx="6.6" cy="0" rx="5.6" ry="1.4" fill="#f39020" transform="rotate(90.0)"/><ellipse cx="5.9" cy="0" rx="5.1" ry="1.4" fill="#f39020" transform="rotate(112.5)"/><ellipse cx="6.6" cy="0" rx="5.6" ry="1.4" fill="#f39020" transform="rotate(135.0)"/><ellipse cx="5.9" cy="0" rx="5.1" ry="1.4" fill="#f39020" transform="rotate(157.5)"/><ellipse cx="6.6" cy="0" rx="5.6" ry="1.4" fill="#f39020" transform="rotate(180.0)"/><ellipse cx="5.9" cy="0" rx="5.1" ry="1.4" fill="#f39020" transform="rotate(202.5)"/><ellipse cx="6.6" cy="0" rx="5.6" ry="1.4" fill="#f39020" transform="rotate(225.0)"/><ellipse cx="5.9" cy="0" rx="5.1" ry="1.4" fill="#f39020" transform="rotate(247.5)"/><ellipse cx="6.6" cy="0" rx="5.6" ry="1.4" fill="#f39020" transform="rotate(270.0)"/><ellipse cx="5.9" cy="0" rx="5.1" ry="1.4" fill="#f39020" transform="rotate(292.5)"/><ellipse cx="6.6" cy="0" rx="5.6" ry="1.4" fill="#f39020" transform="rotate(315.0)"/><ellipse cx="5.9" cy="0" rx="5.1" ry="1.4" fill="#f39020" transform="rotate(337.5)"/><circle r="0.1" fill="#e88018"/><circle r="0.1" fill="#f08010"/></g><g transform="translate(58 102) scale(1 1.0)"><circle r="12.0" fill="#c04008"/><ellipse cx="11.0" cy="0" rx="9.4" ry="2.4" fill="#e85a0a" transform="rotate(0.0)"/><ellipse cx="9.9" cy="0" rx="8.5" ry="2.4" fill="#e85a0a" transform="rotate(22.5)"/><ellipse cx="11.0" cy="0" rx="9.4" ry="2.4" fill="#e85a0a" transform="rotate(45.0)"/><ellipse cx="9.9" cy="0" rx="8.5" ry="2.4" fill="#e85a0a" transform="rotate(67.5)"/><ellipse cx="11.0" cy="0" rx="9.4" ry="2.4" fill="#e85a0a" transform="rotate(90.0)"/><ellipse cx="9.9" cy="0" rx="8.5" ry="2.4" fill="#e85a0a" transform="rotate(112.5)"/><ellipse cx="11.0" cy="0" rx="9.4" ry="2.4" fill="#e85a0a" transform="rotate(135.0)"/><ellipse cx="9.9" cy="0" rx="8.5" ry="2.4" fill="#e85a0a" transform="rotate(157.5)"/><ellipse cx="11.0" cy="0" rx="9.4" ry="2.4" fill="#e85a0a" transform="rotate(180.0)"/><ellipse cx="9.9" cy="0" rx="8.5" ry="2.4" fill="#e85a0a" transform="rotate(202.5)"/><ellipse cx="11.0" cy="0" rx="9.4" ry="2.4" fill="#e85a0a" transform="rotate(225.0)"/><ellipse cx="9.9" cy="0" rx="8.5" ry="2.4" fill="#e85a0a" transform="rotate(247.5)"/><ellipse cx="11.0" cy="0" rx="9.4" ry="2.4" fill="#e85a0a" transform="rotate(270.0)"/><ellipse cx="9.9" cy="0" rx="8.5" ry="2.4" fill="#e85a0a" transform="rotate(292.5)"/><ellipse cx="11.0" cy="0" rx="9.4" ry="2.4" fill="#e85a0a" transform="rotate(315.0)"/><ellipse cx="9.9" cy="0" rx="8.5" ry="2.4" fill="#e85a0a" transform="rotate(337.5)"/><circle r="5.4" fill="#c04008"/><circle r="4.0" fill="#151010"/></g><g transform="translate(75.6 65) scale(1 1.0)"><circle r="18.0" fill="#e06a08"/><ellipse cx="16.5" cy="0" rx="14.1" ry="3.6" fill="#f59a10" transform="rotate(0.0)"/><ellipse cx="14.9" cy="0" rx="12.7" ry="3.6" fill="#f59a10" transform="rotate(20.0)"/><ellipse cx="16.5" cy="0" rx="14.1" ry="3.6" fill="#f59a10" transform="rotate(40.0)"/><ellipse cx="14.9" cy="0" rx="12.7" ry="3.6" fill="#f59a10" transform="rotate(60.0)"/><ellipse cx="16.5" cy="0" rx="14.1" ry="3.6" fill="#f59a10" transform="rotate(80.0)"/><ellipse cx="14.9" cy="0" rx="12.7" ry="3.6" fill="#f59a10" transform="rotate(100.0)"/><ellipse cx="16.5" cy="0" rx="14.1" ry="3.6" fill="#f59a10" transform="rotate(120.0)"/><ellipse cx="14.9" cy="0" rx="12.7" ry="3.6" fill="#f59a10" transform="rotate(140.0)"/><ellipse cx="16.5" cy="0" rx="14.1" ry="3.6" fill="#f59a10" transform="rotate(160.0)"/><ellipse cx="14.9" cy="0" rx="12.7" ry="3.6" fill="#f59a10" transform="rotate(180.0)"/><ellipse cx="16.5" cy="0" rx="14.1" ry="3.6" fill="#f59a10" transform="rotate(200.0)"/><ellipse cx="14.9" cy="0" rx="12.7" ry="3.6" fill="#f59a10" transform="rotate(220.0)"/><ellipse cx="16.5" cy="0" rx="14.1" ry="3.6" fill="#f59a10" transform="rotate(240.0)"/><ellipse cx="14.9" cy="0" rx="12.7" ry="3.6" fill="#f59a10" transform="rotate(260.0)"/><ellipse cx="16.5" cy="0" rx="14.1" ry="3.6" fill="#f59a10" transform="rotate(280.0)"/><ellipse cx="14.9" cy="0" rx="12.7" ry="3.6" fill="#f59a10" transform="rotate(300.0)"/><ellipse cx="16.5" cy="0" rx="14.1" ry="3.6" fill="#f59a10" transform="rotate(320.0)"/><ellipse cx="14.9" cy="0" rx="12.7" ry="3.6" fill="#f59a10" transform="rotate(340.0)"/><circle r="6.8" fill="#d86008"/><circle r="5.0" fill="#1a1a14"/></g><g transform="translate(13 69) scale(1 1.0)"><circle r="13.2" fill="#d89010"/><ellipse cx="12.1" cy="0" rx="10.3" ry="2.6" fill="#fcc020" transform="rotate(0.0)"/><ellipse cx="10.9" cy="0" rx="9.3" ry="2.6" fill="#fcc020" transform="rotate(22.5)"/><ellipse cx="12.1" cy="0" rx="10.3" ry="2.6" fill="#fcc020" transform="rotate(45.0)"/><ellipse cx="10.9" cy="0" rx="9.3" ry="2.6" fill="#fcc020" transform="rotate(67.5)"/><ellipse cx="12.1" cy="0" rx="10.3" ry="2.6" fill="#fcc020" transform="rotate(90.0)"/><ellipse cx="10.9" cy="0" rx="9.3" ry="2.6" fill="#fcc020" transform="rotate(112.5)"/><ellipse cx="12.1" cy="0" rx="10.3" ry="2.6" fill="#fcc020" transform="rotate(135.0)"/><ellipse cx="10.9" cy="0" rx="9.3" ry="2.6" fill="#fcc020" transform="rotate(157.5)"/><ellipse cx="12.1" cy="0" rx="10.3" ry="2.6" fill="#fcc020" transform="rotate(180.0)"/><ellipse cx="10.9" cy="0" rx="9.3" ry="2.6" fill="#fcc020" transform="rotate(202.5)"/><ellipse cx="12.1" cy="0" rx="10.3" ry="2.6" fill="#fcc020" transform="rotate(225.0)"/><ellipse cx="10.9" cy="0" rx="9.3" ry="2.6" fill="#fcc020" transform="rotate(247.5)"/><ellipse cx="12.1" cy="0" rx="10.3" ry="2.6" fill="#fcc020" transform="rotate(270.0)"/><ellipse cx="10.9" cy="0" rx="9.3" ry="2.6" fill="#fcc020" transform="rotate(292.5)"/><ellipse cx="12.1" cy="0" rx="10.3" ry="2.6" fill="#fcc020" transform="rotate(315.0)"/><ellipse cx="10.9" cy="0" rx="9.3" ry="2.6" fill="#fcc020" transform="rotate(337.5)"/><circle r="5.4" fill="#d89010"/><circle r="4.0" fill="#4a3018"/></g><g transform="translate(114 77.5) scale(1 1.0)"><circle r="15.6" fill="#e0a018"/><ellipse cx="14.3" cy="0" rx="12.2" ry="3.1" fill="#fcc828" transform="rotate(0.0)"/><ellipse cx="12.9" cy="0" rx="11.0" ry="3.1" fill="#fcc828" transform="rotate(20.0)"/><ellipse cx="14.3" cy="0" rx="12.2" ry="3.1" fill="#fcc828" transform="rotate(40.0)"/><ellipse cx="12.9" cy="0" rx="11.0" ry="3.1" fill="#fcc828" transform="rotate(60.0)"/><ellipse cx="14.3" cy="0" rx="12.2" ry="3.1" fill="#fcc828" transform="rotate(80.0)"/><ellipse cx="12.9" cy="0" rx="11.0" ry="3.1" fill="#fcc828" transform="rotate(100.0)"/><ellipse cx="14.3" cy="0" rx="12.2" ry="3.1" fill="#fcc828" transform="rotate(120.0)"/><ellipse cx="12.9" cy="0" rx="11.0" ry="3.1" fill="#fcc828" transform="rotate(140.0)"/><ellipse cx="14.3" cy="0" rx="12.2" ry="3.1" fill="#fcc828" transform="rotate(160.0)"/><ellipse cx="12.9" cy="0" rx="11.0" ry="3.1" fill="#fcc828" transform="rotate(180.0)"/><ellipse cx="14.3" cy="0" rx="12.2" ry="3.1" fill="#fcc828" transform="rotate(200.0)"/><ellipse cx="12.9" cy="0" rx="11.0" ry="3.1" fill="#fcc828" transform="rotate(220.0)"/><ellipse cx="14.3" cy="0" rx="12.2" ry="3.1" fill="#fcc828" transform="rotate(240.0)"/><ellipse cx="12.9" cy="0" rx="11.0" ry="3.1" fill="#fcc828" transform="rotate(260.0)"/><ellipse cx="14.3" cy="0" rx="12.2" ry="3.1" fill="#fcc828" transform="rotate(280.0)"/><ellipse cx="12.9" cy="0" rx="11.0" ry="3.1" fill="#fcc828" transform="rotate(300.0)"/><ellipse cx="14.3" cy="0" rx="12.2" ry="3.1" fill="#fcc828" transform="rotate(320.0)"/><ellipse cx="12.9" cy="0" rx="11.0" ry="3.1" fill="#fcc828" transform="rotate(340.0)"/><circle r="6.1" fill="#e0a018"/><circle r="4.5" fill="#6a4a28"/></g><g transform="translate(30 130) scale(1 1.0)"><circle r="14.4" fill="#f09010"/><ellipse cx="13.2" cy="0" rx="11.3" ry="2.9" fill="#fba818" transform="rotate(0.0)"/><ellipse cx="11.9" cy="0" rx="10.2" ry="2.9" fill="#fba818" transform="rotate(20.0)"/><ellipse cx="13.2" cy="0" rx="11.3" ry="2.9" fill="#fba818" transform="rotate(40.0)"/><ellipse cx="11.9" cy="0" rx="10.2" ry="2.9" fill="#fba818" transform="rotate(60.0)"/><ellipse cx="13.2" cy="0" rx="11.3" ry="2.9" fill="#fba818" transform="rotate(80.0)"/><ellipse cx="11.9" cy="0" rx="10.2" ry="2.9" fill="#fba818" transform="rotate(100.0)"/><ellipse cx="13.2" cy="0" rx="11.3" ry="2.9" fill="#fba818" transform="rotate(120.0)"/><ellipse cx="11.9" cy="0" rx="10.2" ry="2.9" fill="#fba818" transform="rotate(140.0)"/><ellipse cx="13.2" cy="0" rx="11.3" ry="2.9" fill="#fba818" transform="rotate(160.0)"/><ellipse cx="11.9" cy="0" rx="10.2" ry="2.9" fill="#fba818" transform="rotate(180.0)"/><ellipse cx="13.2" cy="0" rx="11.3" ry="2.9" fill="#fba818" transform="rotate(200.0)"/><ellipse cx="11.9" cy="0" rx="10.2" ry="2.9" fill="#fba818" transform="rotate(220.0)"/><ellipse cx="13.2" cy="0" rx="11.3" ry="2.9" fill="#fba818" transform="rotate(240.0)"/><ellipse cx="11.9" cy="0" rx="10.2" ry="2.9" fill="#fba818" transform="rotate(260.0)"/><ellipse cx="13.2" cy="0" rx="11.3" ry="2.9" fill="#fba818" transform="rotate(280.0)"/><ellipse cx="11.9" cy="0" rx="10.2" ry="2.9" fill="#fba818" transform="rotate(300.0)"/><ellipse cx="13.2" cy="0" rx="11.3" ry="2.9" fill="#fba818" transform="rotate(320.0)"/><ellipse cx="11.9" cy="0" rx="10.2" ry="2.9" fill="#fba818" transform="rotate(340.0)"/><circle r="4.1" fill="#f09010"/><circle r="3.0" fill="#402010"/></g><g transform="translate(68 128) scale(1 1.0)" filter="url(#b1)"><circle r="8.4" fill="#f0a010"/><ellipse cx="7.7" cy="0" rx="6.6" ry="1.7" fill="#fcc020" transform="rotate(0.0)"/><ellipse cx="6.9" cy="0" rx="5.9" ry="1.7" fill="#fcc020" transform="rotate(22.5)"/><ellipse cx="7.7" cy="0" rx="6.6" ry="1.7" fill="#fcc020" transform="rotate(45.0)"/><ellipse cx="6.9" cy="0" rx="5.9" ry="1.7" fill="#fcc020" transform="rotate(67.5)"/><ellipse cx="7.7" cy="0" rx="6.6" ry="1.7" fill="#fcc020" transform="rotate(90.0)"/><ellipse cx="6.9" cy="0" rx="5.9" ry="1.7" fill="#fcc020" transform="rotate(112.5)"/><ellipse cx="7.7" cy="0" rx="6.6" ry="1.7" fill="#fcc020" transform="rotate(135.0)"/><ellipse cx="6.9" cy="0" rx="5.9" ry="1.7" fill="#fcc020" transform="rotate(157.5)"/><ellipse cx="7.7" cy="0" rx="6.6" ry="1.7" fill="#fcc020" transform="rotate(180.0)"/><ellipse cx="6.9" cy="0" rx="5.9" ry="1.7" fill="#fcc020" transform="rotate(202.5)"/><ellipse cx="7.7" cy="0" rx="6.6" ry="1.7" fill="#fcc020" transform="rotate(225.0)"/><ellipse cx="6.9" cy="0" rx="5.9" ry="1.7" fill="#fcc020" transform="rotate(247.5)"/><ellipse cx="7.7" cy="0" rx="6.6" ry="1.7" fill="#fcc020" transform="rotate(270.0)"/><ellipse cx="6.9" cy="0" rx="5.9" ry="1.7" fill="#fcc020" transform="rotate(292.5)"/><ellipse cx="7.7" cy="0" rx="6.6" ry="1.7" fill="#fcc020" transform="rotate(315.0)"/><ellipse cx="6.9" cy="0" rx="5.9" ry="1.7" fill="#fcc020" transform="rotate(337.5)"/><circle r="3.4" fill="#f0a010"/><circle r="2.5" fill="#2a2418"/></g><g transform="translate(92 112) scale(1 1.0)" filter="url(#b2)"><circle r="8.4" fill="#e06008"/><ellipse cx="7.7" cy="0" rx="6.6" ry="1.7" fill="#f07010" transform="rotate(0.0)"/><ellipse cx="6.9" cy="0" rx="5.9" ry="1.7" fill="#f07010" transform="rotate(22.5)"/><ellipse cx="7.7" cy="0" rx="6.6" ry="1.7" fill="#f07010" transform="rotate(45.0)"/><ellipse cx="6.9" cy="0" rx="5.9" ry="1.7" fill="#f07010" transform="rotate(67.5)"/><ellipse cx="7.7" cy="0" rx="6.6" ry="1.7" fill="#f07010" transform="rotate(90.0)"/><ellipse cx="6.9" cy="0" rx="5.9" ry="1.7" fill="#f07010" transform="rotate(112.5)"/><ellipse cx="7.7" cy="0" rx="6.6" ry="1.7" fill="#f07010" transform="rotate(135.0)"/><ellipse cx="6.9" cy="0" rx="5.9" ry="1.7" fill="#f07010" transform="rotate(157.5)"/><ellipse cx="7.7" cy="0" rx="6.6" ry="1.7" fill="#f07010" transform="rotate(180.0)"/><ellipse cx="6.9" cy="0" rx="5.9" ry="1.7" fill="#f07010" transform="rotate(202.5)"/><ellipse cx="7.7" cy="0" rx="6.6" ry="1.7" fill="#f07010" transform="rotate(225.0)"/><ellipse cx="6.9" cy="0" rx="5.9" ry="1.7" fill="#f07010" transform="rotate(247.5)"/><ellipse cx="7.7" cy="0" rx="6.6" ry="1.7" fill="#f07010" transform="rotate(270.0)"/><ellipse cx="6.9" cy="0" rx="5.9" ry="1.7" fill="#f07010" transform="rotate(292.5)"/><ellipse cx="7.7" cy="0" rx="6.6" ry="1.7" fill="#f07010" transform="rotate(315.0)"/><ellipse cx="6.9" cy="0" rx="5.9" ry="1.7" fill="#f07010" transform="rotate(337.5)"/><circle r="2.7" fill="#e06008"/><circle r="2.0" fill="#a04010"/></g><g transform="translate(168 118) scale(1 1.0)" filter="url(#b2)"><circle r="9.6" fill="#e07010"/><ellipse cx="8.8" cy="0" rx="7.5" ry="1.9" fill="#f08018" transform="rotate(0.0)"/><ellipse cx="7.9" cy="0" rx="6.8" ry="1.9" fill="#f08018" transform="rotate(22.5)"/><ellipse cx="8.8" cy="0" rx="7.5" ry="1.9" fill="#f08018" transform="rotate(45.0)"/><ellipse cx="7.9" cy="0" rx="6.8" ry="1.9" fill="#f08018" transform="rotate(67.5)"/><ellipse cx="8.8" cy="0" rx="7.5" ry="1.9" fill="#f08018" transform="rotate(90.0)"/><ellipse cx="7.9" cy="0" rx="6.8" ry="1.9" fill="#f08018" transform="rotate(112.5)"/><ellipse cx="8.8" cy="0" rx="7.5" ry="1.9" fill="#f08018" transform="rotate(135.0)"/><ellipse cx="7.9" cy="0" rx="6.8" ry="1.9" fill="#f08018" transform="rotate(157.5)"/><ellipse cx="8.8" cy="0" rx="7.5" ry="1.9" fill="#f08018" transform="rotate(180.0)"/><ellipse cx="7.9" cy="0" rx="6.8" ry="1.9" fill="#f08018" transform="rotate(202.5)"/><ellipse cx="8.8" cy="0" rx="7.5" ry="1.9" fill="#f08018" transform="rotate(225.0)"/><ellipse cx="7.9" cy="0" rx="6.8" ry="1.9" fill="#f08018" transform="rotate(247.5)"/><ellipse cx="8.8" cy="0" rx="7.5" ry="1.9" fill="#f08018" transform="rotate(270.0)"/><ellipse cx="7.9" cy="0" rx="6.8" ry="1.9" fill="#f08018" transform="rotate(292.5)"/><ellipse cx="8.8" cy="0" rx="7.5" ry="1.9" fill="#f08018" transform="rotate(315.0)"/><ellipse cx="7.9" cy="0" rx="6.8" ry="1.9" fill="#f08018" transform="rotate(337.5)"/><circle r="4.1" fill="#e07010"/><circle r="3.0" fill="#803010"/></g><g stroke="#2a1a10" stroke-width="1.3" fill="none"><path d="M71 88 Q64 108 54 128"/><path d="M113 94 Q112 112 112 136"/><path d="M10 80 Q9 100 7 126"/><path d="M108 22 Q107 40 107 58" stroke="#a07050" stroke-width="1.5"/></g></g></svg>
<div class="a" style="left:861px;top:398px;width:76px;height:26px;border:1px solid #e8681a;border-radius:13px"></div>
<div class="t " style="left:876.6px;top:403.77px;font-size:12.2px;color:#e2621c">Preview</div>
<div class="a" style="left:790px;top:430px;width:213px;height:130px;overflow:hidden">
<div class="t inf" style="left:9px;top:13.88px;font-size:11.9px;">Filename:</div>
<div class="t inf" style="left:102.5px;top:13.84px;font-size:12px;">welcomescan.jpg</div>
<div class="t inf" style="left:9px;top:35.88px;font-size:11.9px;">Size:</div>
<div class="t inf" style="left:102.5px;top:35.84px;font-size:12px;">504.32 KB</div>
<div class="t inf" style="left:9px;top:57.88px;font-size:11.9px;">Dimensions:</div>
<div class="t inf" style="left:102.5px;top:57.84px;font-size:12px;">1024x768</div>
<div class="t inf" style="left:9px;top:79.88px;font-size:11.9px;">Date Created:</div>
<div class="t inf" style="left:102.5px;top:79.84px;font-size:12px;letter-spacing:0.35px">2022-11-13 18:43:5</div>
<div class="t inf" style="left:9px;top:101.88px;font-size:11.9px;">Date Modified:</div>
<div class="t inf" style="left:102.5px;top:101.84px;font-size:12px;letter-spacing:0.35px">2019-10-15 13:53:5</div>
</div>
<div class="t " style="left:21.5px;top:718.70px;font-size:12.4px;color:#222">Total <b style="font-size:13.4px;letter-spacing:0.25px">118.45 GB</b> in <b style="font-size:13.4px;letter-spacing:0.3px">823702</b> files.</div>
<div class="t " style="left:215px;top:718.29px;font-size:13.6px;color:#222">Selected <b>0 Bytes</b> in <b>0</b> files.</div>
<div class="t " style="left:20.6px;top:740.90px;font-size:12.4px;color:#2a9be6;text-decoration:underline">Have difficulty with data recovery? Click here for instructions.</div>
<div class="a" style="left:796px;top:713px;width:102px;height:42px;border:1px solid #d0d0d0;border-radius:4px"></div>
<div class="a" style="left:914px;top:713px;width:102px;height:42px;border:1px solid #d0d0d0;border-radius:4px"></div>
<div class="t " style="left:826px;top:727.20px;font-size:15px;font-weight:bold;color:#555">Home</div>
<div class="t " style="left:946px;top:727.20px;font-size:15px;font-weight:bold;color:#aaa;letter-spacing:0.6px">Save</div>
<svg class="a" style="left:0px;top:270px" width="24" height="30" viewBox="0 270 24 30"><path d="M6 275.5 L18 287 L13.6 287 L16.6 294.6 L14.2 295.8 L10.8 288.2 L6 292.5Z" fill="#fff"/><path d="M6 275.5 L18 287 L13.6 287 L16.6 294.6 L14.2 295.8 L10.8 288.2 L6.3 292.2" fill="none" stroke="#000" stroke-width="1.1" stroke-linejoin="round"/><path d="M18.5 288 L14.5 288 L17.5 295.5" fill="none" stroke="rgba(0,0,0,0.12)" stroke-width="1.5"/></svg>
</body></html>
